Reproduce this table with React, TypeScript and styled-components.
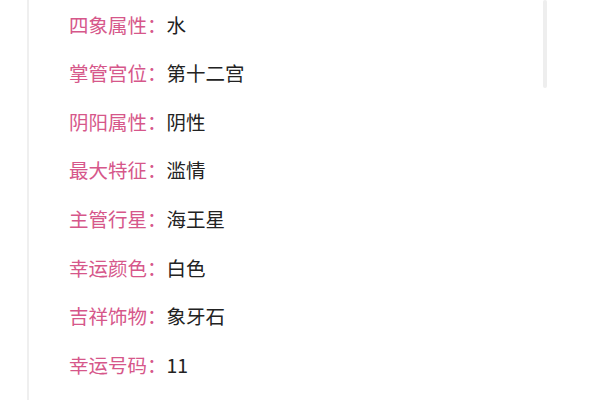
import React from "react";
import styled, { createGlobalStyle } from "styled-components";

const Global = createGlobalStyle`
  html, body { margin: 0; padding: 0; background: #fff; overflow: hidden; }
  body { font-family: "Noto Sans CJK SC", "Noto Sans", sans-serif; }
`;

const Page = styled.div`
  width: 600px;
  height: 400px;
  display: flex;
  overflow: hidden;
  background: #fff;
`;

const Card = styled.div`
  margin-left: 27px;
  width: 516px;
  height: 400px;
  border-left: 2px solid #efefef;
  display: flex;
  flex-direction: column;
  padding-left: 40px;
  box-sizing: border-box;
`;

const Scroll = styled.div`
  width: 4px;
  height: 88px;
  background: #eeeeee;
  border-radius: 2px;
`;

const Row = styled.div`
  height: 48.6px;
  flex: none;
  display: flex;
  align-items: center;
  font-size: 19.5px;
  line-height: 1;
`;

const Label = styled.span`
  color: #d6578a;
`;

const Value = styled.span`
  color: #222;
`;

const items: [string, string][] = [
  ["四象属性", "水"],
  ["掌管宫位", "第十二宫"],
  ["阴阳属性", "阴性"],
  ["最大特征", "滥情"],
  ["主管行星", "海王星"],
  ["幸运颜色", "白色"],
  ["吉祥饰物", "象牙石"],
  ["幸运号码", "11"],
  ["开运金属", "锡"],
];

export default function App() {
  return (
    <Page>
      <Global />
      <Card>
        {items.map(([k, v]) => (
          <Row key={k}>
            <Label>{k}：</Label>
            <Value>{v}</Value>
          </Row>
        ))}
      </Card>
      <Scroll />
    </Page>
  );
}
